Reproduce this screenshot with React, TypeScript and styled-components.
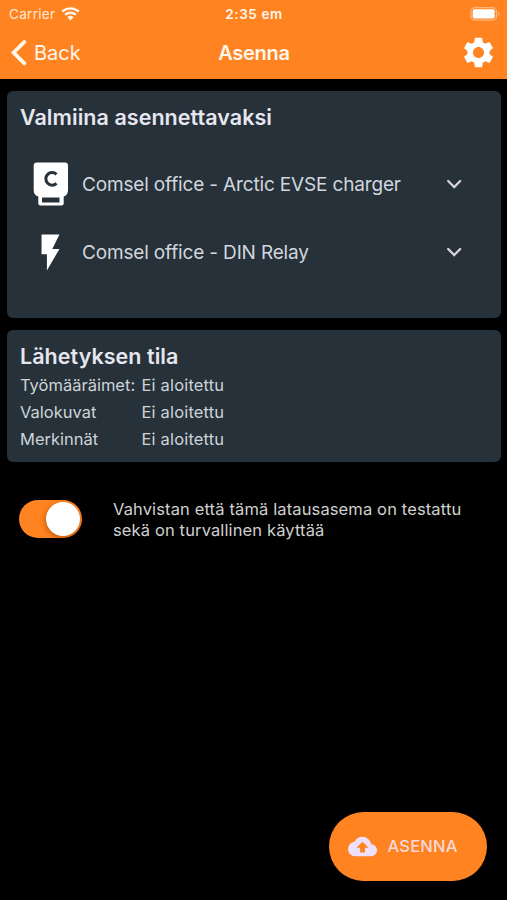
import React, { useState } from "react";
import styled, { createGlobalStyle } from "styled-components";
import { MdCloudUpload, MdFlashOn, MdSettings } from "react-icons/md";

const GlobalStyle = createGlobalStyle`
  * { box-sizing: border-box; }
  body { margin: 0; background: #000; }
  button { border: 0; padding: 0; background: none; color: inherit; font: inherit; cursor: pointer; }
  svg { display: block; flex: none; }
`;

const Screen = styled.div`
  width: 100%;
  height: 900px;
  display: flex;
  flex-direction: column;
  background: #000;
  color: #dfe1e9;
  font-family: Inter, "Liberation Sans", sans-serif;
  overflow: hidden;
`;

const Header = styled.header`
  height: 79px;
  flex: none;
  background: #ff8320;
  color: #fff6ec;
`;

const StatusBar = styled.div`
  height: 27px;
  padding: 0 5px 0 9px;
  display: grid;
  grid-template-columns: 1fr auto 1fr;
  align-items: center;
  font-size: 13.5px;
  line-height: 28px;
`;

const Carrier = styled.div`
  display: flex;
  align-items: center;
  gap: 6px;
  color: #ffe9d5;
  letter-spacing: 0.3px;
`;

const Clock = styled.div`
  font-weight: 600;
  letter-spacing: 0.6px;
  margin-right: 3px;
`;

const BatterySlot = styled.div`
  display: flex;
  justify-content: flex-end;
`;

const NavBar = styled.nav`
  height: 51px;
  padding: 0 10px 0 11px;
  display: grid;
  grid-template-columns: 1fr auto 1fr;
  align-items: center;
  font-size: 20px;
`;

const BackButton = styled.button`
  display: flex;
  align-items: center;
  gap: 7px;
`;

const Title = styled.h1`
  margin: 0;
  font-size: 20px;
  font-weight: 600;
  letter-spacing: -0.25px;
`;

const SettingsButton = styled.button`
  justify-self: end;
  color: #fff;
`;

const Card = styled.section<{ $height: number }>`
  height: ${(p) => p.$height}px;
  flex: none;
  margin: 12px 6px 0 7px;
  padding: 12px 13px;
  border-radius: 6px;
  background: #263139;
`;

const CardTitle = styled.h2`
  margin: 0;
  font-size: 21.5px;
  line-height: 28px;
  font-weight: 600;
  letter-spacing: 0.05px;
  color: #e6e6f0;
`;

const DeviceList = styled.div`
  padding-top: 19px;
`;

const DeviceRow = styled.button`
  width: 100%;
  height: 68px;
  display: grid;
  grid-template-columns: 62px 1fr 68px;
  align-items: center;
  text-align: left;
  font-size: 19px;
  line-height: 24px;
  letter-spacing: -0.16px;
  color: #d2d6de;
`;

const DeviceName = styled.span`
  padding-top: 1px;
`;

const DeviceIcon = styled.span`
  display: flex;
  justify-content: center;
  padding-right: 1px;
  color: #fff;
`;

const ChevronSlot = styled.span`
  display: flex;
  justify-content: center;
`;

const StatusGrid = styled.dl`
  margin: 2px 0 0;
  display: grid;
  grid-template-columns: 121.5px 1fr;
  font-size: 16.5px;
  line-height: 27px;
  color: #ced3d9;
`;

const Label = styled.dt`
  white-space: nowrap;
`;

const Value = styled.dd`
  margin: 0;
  letter-spacing: 0.17px;
`;

const ConfirmRow = styled.div`
  margin: 36px 0 0 19px;
  display: flex;
  align-items: center;
  gap: 31px;
`;

const Toggle = styled.button<{ $on: boolean }>`
  width: 63px;
  height: 38px;
  padding: 2px;
  display: flex;
  justify-content: ${(p) => (p.$on ? "flex-end" : "flex-start")};
  border-radius: 20px;
  background: ${(p) => (p.$on ? "#ff8320" : "#39393d")};
`;

const Knob = styled.span`
  width: 34px;
  height: 34px;
  border-radius: 50%;
  background: #fff;
  box-shadow: -1px 2px 5px rgba(80, 30, 0, 0.35);
`;

const ConfirmText = styled.p`
  margin: 0;
  padding-top: 1px;
  font-size: 16.5px;
  line-height: 21px;
  letter-spacing: 0.13px;
  color: #d0d0d0;
`;

const Footer = styled.footer`
  margin-top: auto;
  padding: 0 20px 19.5px 0;
  display: flex;
  justify-content: flex-end;
`;

const InstallButton = styled.button`
  width: 158px;
  height: 69px;
  padding-left: 19px;
  display: flex;
  align-items: center;
  gap: 10.5px;
  border-radius: 35px;
  background: #ff8320;
  color: #eedffa;
  font-size: 16.5px;
  font-weight: 500;
  letter-spacing: 0.2px;
`;

const InstallLabel = styled.span`
  color: #f9d9d9;
`;

const WifiIcon = () => (
  <svg width="19" height="15" viewBox="0 0 19 15">
    <g fill="none" stroke="#fff6ec" strokeWidth="2.4">
      <path d="M1.2 4.7a12 12 0 0 1 16.6 0" />
      <path d="M4.2 7.9a7.6 7.6 0 0 1 10.6 0" />
    </g>
    <path d="M9.5 13.5 6.4 10.3a4.5 4.5 0 0 1 6.2 0z" fill="#fff6ec" />
  </svg>
);

const BatteryIcon = () => (
  <svg width="32" height="15" viewBox="0 0 32 15">
    <rect x="1" y=".6" width="25.5" height="12.6" rx="4" fill="none" stroke="#ffb67c" strokeWidth="1.2" />
    <rect x="2.7" y="2.3" width="22" height="9.2" rx="2" fill="#fff" />
    <path d="M28.3 5v4a2.3 2.3 0 0 0 0-4z" fill="#ffb67c" />
  </svg>
);

const BackIcon = () => (
  <svg width="16" height="26" viewBox="0 0 16 26">
    <path d="M13.3 2 2.6 12.6l10.7 10.8" fill="none" stroke="#fff6ec" strokeWidth="3.8" strokeLinecap="round" strokeLinejoin="miter" />
  </svg>
);

const ChargerIcon = () => (
  <svg width="36" height="44" viewBox="0 0 36 44">
    <path
      d="M4 .6h28a3 3 0 0 1 3 3V28c0 3.600-1.6 5.700-4.300 6.500v7a2 2 0 0 1-2 2H7.300a2 2 0 0 1-2-2v-7C2.300 33.700.7 31.600.7 28V3.600a3 3 0 0 1 3-3z"
      fill="#fff"
    />
    <path d="M9 35.500h17.500v5H9z" fill="#263139" />
    <path d="M23.500 12.300a6.300 6.300 0 1 0 0 9.100" fill="none" stroke="#263139" strokeWidth="3" />
  </svg>
);

const ChevronIcon = () => (
  <svg width="16" height="10" viewBox="0 0 16 10">
    <path d="m2.2 2 6 6 6-6" fill="none" stroke="#d6d4e0" strokeWidth="2.3" strokeLinecap="round" />
  </svg>
);

const devices = [
  { name: "Comsel office - Arctic EVSE charger", icon: <ChargerIcon /> },
  { name: "Comsel office - DIN Relay", icon: <MdFlashOn size={43} /> },
];

const statuses = [
  ["Työmääräimet:", "Ei aloitettu"],
  ["Valokuvat", "Ei aloitettu"],
  ["Merkinnät", "Ei aloitettu"],
];

export default function App() {
  const [confirmed, setConfirmed] = useState(true);

  return (
    <Screen>
      <GlobalStyle />
      <Header>
        <StatusBar>
          <Carrier>
            <span>Carrier</span>
            <WifiIcon />
          </Carrier>
          <Clock>2:35 em</Clock>
          <BatterySlot>
            <BatteryIcon />
          </BatterySlot>
        </StatusBar>
        <NavBar>
          <BackButton>
            <BackIcon />
            <span>Back</span>
          </BackButton>
          <Title>Asenna</Title>
          <SettingsButton aria-label="Asetukset">
            <MdSettings size={37} />
          </SettingsButton>
        </NavBar>
      </Header>

      <Card $height={227}>
        <CardTitle>Valmiina asennettavaksi</CardTitle>
        <DeviceList>
          {devices.map((d) => (
            <DeviceRow key={d.name}>
              <DeviceIcon>{d.icon}</DeviceIcon>
              <DeviceName>{d.name}</DeviceName>
              <ChevronSlot>
                <ChevronIcon />
              </ChevronSlot>
            </DeviceRow>
          ))}
        </DeviceList>
      </Card>

      <Card $height={131.5}>
        <CardTitle>Lähetyksen tila</CardTitle>
        <StatusGrid>
          {statuses.map(([label, value]) => (
            <React.Fragment key={label}>
              <Label>{label}</Label>
              <Value>{value}</Value>
            </React.Fragment>
          ))}
        </StatusGrid>
      </Card>

      <ConfirmRow>
        <Toggle $on={confirmed} role="switch" aria-checked={confirmed} onClick={() => setConfirmed(!confirmed)}>
          <Knob />
        </Toggle>
        <ConfirmText>
          Vahvistan että tämä latausasema on testattu
          <br />
          sekä on turvallinen käyttää
        </ConfirmText>
      </ConfirmRow>

      <Footer>
        <InstallButton>
          <MdCloudUpload size={29} />
          <InstallLabel>ASENNA</InstallLabel>
        </InstallButton>
      </Footer>
    </Screen>
  );
}
